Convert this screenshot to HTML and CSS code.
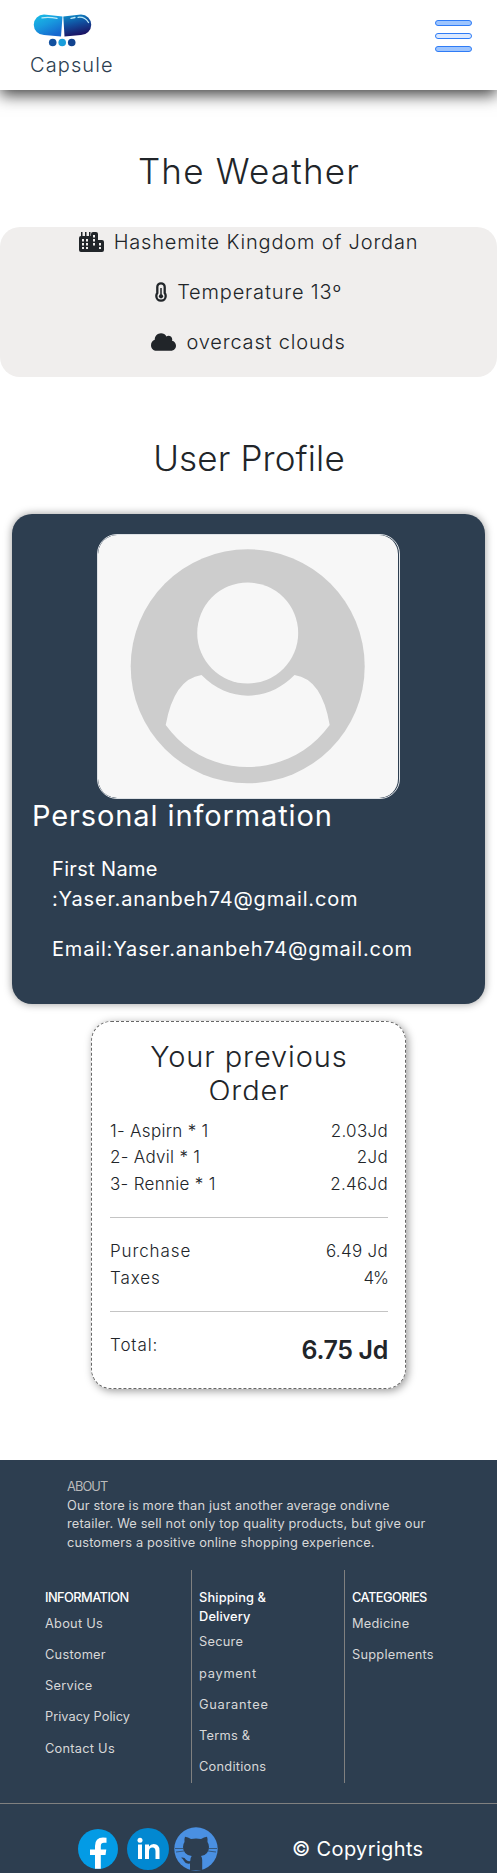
FILE: index.html
```html
<!DOCTYPE html>
<html lang="en">
<head>
<meta charset="utf-8">
<title>Capsule</title>
<link rel="stylesheet" href="styles.css">
</head>
<body>
<header class="site-header">
  <a class="brand">
    <svg class="brand-logo" viewBox="0 0 62 34" width="62" height="34">
      <defs>
        <linearGradient id="capL" x1="0" y1="0" x2=".6" y2="1"><stop offset="0" stop-color="#19c0e6"/><stop offset=".5" stop-color="#189bdf"/><stop offset="1" stop-color="#1668cf"/></linearGradient>
        <linearGradient id="capR" x1="0" y1="0" x2=".3" y2="1"><stop offset="0" stop-color="#0b93cd"/><stop offset=".5" stop-color="#114f9f"/><stop offset="1" stop-color="#1b1464"/></linearGradient>
      </defs>
      <path d="M12 1.500 30.500 3.500 29 23.500 12 22A10.200 10.200 0 0 1 12 1.500Z" fill="url(#capL)"/>
      <path d="M31.300 3.500 49 1.500a10.200 10.200 0 0 1 0 20.500L32.500 23.500Z" fill="url(#capR)"/>
      <path d="M10 4.800Q17 3.800 25 5.300M39 5.300 43 4.500M46 4.300Q53 3.500 56.500 9.500" fill="none" stroke="#bfeaf7" stroke-width="1.300" stroke-linecap="round"/>
      <circle cx="20.700" cy="29.500" r="3.800" fill="#12509f"/><circle cx="30.200" cy="29.500" r="3.800" fill="#1a9edb"/><circle cx="39.700" cy="29.500" r="3.800" fill="#12438f"/>
    </svg>
    <span class="brand-name">Capsule</span>
  </a>
  <div class="menu-button"><i></i><i class="mid"></i><i></i></div>
</header>
<main>
  <h1 class="page-title">The Weather</h1>
  <section class="weather">
    <p><svg viewBox="0 0 25 20" width="25" height="20"><path fill="#212529" fill-rule="evenodd" d="M2 0h1.500v4H6V0h1.500v4H10V0h1.500v4H12V2q0-2 2-2h3q2 0 2 2v6h4q2 0 2 2v8q0 2-2 2H2q-2 0-2-2V6q0-2 2-2ZM3 7v2.500h2V7ZM7 7v2.500h2V7ZM3 11v2.500h2V11ZM7 11v2.500h2V11ZM3 15v2h2v-2ZM7 15v2h2v-2ZM14 3v2.500h2V3ZM14 7v2.500h2V7ZM14 11v2.500h2V11ZM20 11v2.500h2V11ZM20 15v2h2v-2Z"/></svg><span>Hashemite Kingdom of Jordan</span></p>
    <p><svg viewBox="0 0 12 20" width="12" height="20"><path d="M2.300 11V5a3.700 3.700 0 0 1 7.400 0v6q1 1.300 1 3a4.700 4.700 0 0 1-9.400 0q0-1.700 1-3Z" fill="none" stroke="#212529" stroke-width="2.300"/><path d="M6 6v8" stroke="#212529" stroke-width="1.500"/><circle cx="6" cy="14.300" r="2.100" fill="#212529"/></svg><span>Temperature 13º</span></p>
    <p><svg viewBox="0 0 640 512" width="25" height="20"><path fill="#212529" d="M537.600 226.600c4.100-10.700 6.400-22.400 6.400-34.600 0-53-43-96-96-96-19.700 0-38.100 6-53.300 16.200C367 64.200 315.300 32 256 32c-88.400 0-160 71.600-160 160 0 2.700.1 5.400.2 8.100C40.200 219.800 0 273.200 0 336c0 79.500 64.500 144 144 144h368c70.700 0 128-57.300 128-128 0-61.900-44-113.600-102.400-125.400z"/></svg><span>overcast clouds</span></p>
  </section>
  <h1 class="page-title profile-heading">User Profile</h1>
  <section class="profile">
    <div class="avatar">
      <svg viewBox="0 0 300 263" width="300" height="263"><rect width="300" height="263" fill="#f7f7f7"/><circle cx="149.700" cy="131.300" r="117" fill="#cdcdcd"/><circle cx="149.700" cy="98" r="50.500" fill="#f7f7f7"/><path fill="#f7f7f7" d="M103.500 140Q76 144 67.700 190C108 246 191 246 231.700 190Q224 144 196.500 140C170 167.500 130 167.500 103.500 140Z"/></svg>
    </div>
    <h2 class="profile-title">Personal information</h2>
    <ul class="profile-list">
      <li><span class="label">First Name</span><br>:Yaser.ananbeh74@gmail.com</li>
      <li>Email:Yaser.ananbeh74@gmail.com</li>
    </ul>
  </section>
  <section class="order">
    <h2 class="order-title">Your previous<br>Order</h2>
    <div class="row"><span>1- Aspirn * 1</span><span>2.03Jd</span></div>
    <div class="row"><span>2- Advil * 1</span><span>2Jd</span></div>
    <div class="row"><span>3- Rennie * 1</span><span>2.46Jd</span></div>
    <hr>
    <div class="row"><span class="wide">Purchase</span><span>6.49 Jd</span></div>
    <div class="row"><span class="wide">Taxes</span><span class="tight">4%</span></div>
    <hr>
    <div class="row"><span class="wide">Total:</span><strong class="total">6.75 Jd</strong></div>
  </section>
</main>
<footer class="site-footer">
  <div class="about">
    <h6>ABOUT</h6>
    <p>Our store is more than just another average ondivne<br>retailer. We sell not only top quality products, but give our<br>customers a positive online shopping experience.</p>
  </div>
  <div class="columns">
    <div class="col"><h6 class="caps">INFORMATION</h6><ul><li>About Us</li><li>Customer<br>Service</li><li class="snug">Privacy Policy</li><li>Contact Us</li></ul></div>
    <div class="col"><h6>Shipping &amp;<br>Delivery</h6><ul><li>Secure<br><span class="wide">payment</span></li><li class="wide">Guarantee</li><li>Terms &amp;<br>Conditions</li></ul></div>
    <div class="col"><h6 class="caps">CATEGORIES</h6><ul><li>Medicine</li><li>Supplements</li></ul></div>
  </div>
  <div class="bottom">
    <div class="social">
      <svg viewBox="0 0 40 40" width="40" height="40"><circle cx="20" cy="20" r="20" fill="#039be5"/><path fill="#fff" d="M17 39.800V26h-5v-5.500h5V17q0-8.500 8-8.500 2 0 3.500.3v5H26q-3.200 0-3.200 3.200v3.500h5.500L27.500 26h-4.700v13.800Z"/></svg>
      <svg viewBox="0 0 42 42" width="42" height="42"><circle cx="21" cy="21" r="21" fill="#0288d1"/><circle cx="13" cy="12.300" r="2.500" fill="#fff"/><path fill="#fff" d="M11 16.500h4V31h-4ZM18 16.500h4v2q1.500-2.500 4.700-2.500 5.800 0 5.800 6.500V31h-4v-7.500q0-4-3-4-3.500 0-3.500 4V31h-4Z"/></svg>
      <svg viewBox="0 0 44 44" width="44" height="44"><circle cx="22" cy="22" r="21.700" fill="#4a90e2"/><path fill="#2d3e50" d="M11 9.800q3 .2 6 2.200 5-1 10 0 3-2 6-2.200 1 2.700.5 5.200 1.500 2 1.500 5 0 7.500-8 9 1.200 1.500 1.200 4v10.300H16v-6.800q-4.500.8-6-2.500-1-2.300-3-3.300 3.500-.7 5 2 1.700 2 4.200 1.300.2-3.500 1.500-5Q9 27.500 9 20q0-3 1.500-5-.5-2.500.5-5.200Z"/><path d="M1 21.500h8.500M2 25l8-1M34.500 21.500H43M34 24l8 1" stroke="#2d3e50" stroke-width=".9" opacity=".75"/></svg>
    </div>
    <p class="copyright">© Copyrights</p>
  </div>
</footer>
</body>
</html>
```

FILE: styles.css
```css
* { box-sizing: border-box; }
body { margin: 0; font-family: Inter, "Open Sans", sans-serif; font-weight: 300; color: #212529; background: #fff; }
h1, h2, h6, p, ul { margin: 0; padding: 0; font-weight: inherit; }
ul { list-style: none; }
svg { display: block; flex: none; }

.site-header { height: 90px; padding: 13px 25px 0 30px; display: flex; justify-content: space-between; background: #fff; box-shadow: 0 5px 15px rgba(0, 0, 0, .75); }
.brand { display: flex; flex-direction: column; color: #2d3e50; font-size: 20px; line-height: 30px; letter-spacing: 1.100px; }
.brand-logo { margin-left: 2px; margin-bottom: 3px; }
.menu-button { width: 37px; padding-top: 7px; display: flex; flex-direction: column; gap: 7px; }
.menu-button i { height: 6px; border: 1px solid #2f7cf6; border-radius: 3px; background: #9ec5fe; }
.menu-button .mid { background: #dbe9ff; }

.page-title { margin-top: 60px; padding-left: 1px; font-size: 35px; line-height: 42px; letter-spacing: 1.220px; text-align: center; white-space: nowrap; }
.profile-heading { letter-spacing: .150px; }
.weather { margin: 35px 0 60px; height: 150px; border-radius: 20px; background: #f0eeed; font-size: 20px; line-height: 30px; letter-spacing: .820px; }
.weather p { display: flex; justify-content: center; align-items: center; gap: 10px; margin-bottom: 20px; }

.profile { margin: 35px 12px 17px; height: 490px; padding: 20px 21px; border-radius: 20px; background: #2d3e50; color: #fff; font-weight: 400; box-shadow: 0 0 8px rgba(0, 0, 0, .4); }
.avatar { width: 303px; height: 265px; margin-left: 64px; border: 1px solid #dee2e6; border-radius: 20px; overflow: hidden; }
.avatar svg { border-radius: 19px; }
.profile-title { margin-left: -1px; font-size: 29px; line-height: 34px; letter-spacing: .890px; white-space: nowrap; }
.profile-list { margin: 21px 0 0 19px; font-size: 20px; line-height: 30px; letter-spacing: .820px; white-space: nowrap; }
.profile-list li { margin-bottom: 20px; }
.profile-list .label { letter-spacing: .350px; }

.order { width: 315px; height: 368px; margin: 0 auto 71px 91px; padding: 18px 17px 0 18px; border: 1px dashed #666; border-radius: 20px; box-shadow: 2px 2px 8px rgba(0, 0, 0, .4); font-size: 17px; line-height: 26.400px; letter-spacing: .300px; }
.order-title { height: 60px; margin-bottom: 18px; overflow: hidden; font-size: 29px; line-height: 34px; letter-spacing: .900px; text-align: center; }
.row { display: flex; justify-content: space-between; }
.order .wide { letter-spacing: .900px; }
.order .tight { letter-spacing: -1px; }
.order hr { margin: 20px 0; border: 0; border-top: 1px solid #c4c4c4; }
.order .total { margin-top: -1px; font-size: 25px; line-height: 39px; font-weight: 600; letter-spacing: -.350px; }

.site-footer { height: 413px; padding-top: 18px; background: #2d3e50; color: #d8d8d8; font-size: 12.800px; font-weight: 400; line-height: 18.700px; letter-spacing: .250px; }
.about { margin-left: 67px; height: 92px; letter-spacing: .170px; white-space: nowrap; }
.about h6 { font-size: inherit; color: #bbb; letter-spacing: -.900px; }
.columns { display: grid; grid-template-columns: 146px 153px 153px; margin-left: 45px; height: 213px; }
.col { padding-top: 19px; }
.col + .col { border-left: 1px solid #808080; padding-left: 7px; }
.col h6 { font-size: inherit; font-weight: 500; color: #fff; letter-spacing: .150px; }
.col .caps { letter-spacing: -.550px; }
.col .wide { letter-spacing: .750px; }
.col .snug { letter-spacing: .020px; }
.col ul { line-height: 31.200px; }
.bottom { margin-top: 20px; border-top: 1px solid #808080; height: 70px; padding: 23px 0 0 78px; display: flex; }
.social { display: flex; align-items: center; gap: 7px; width: 214px; height: 44px; }
.social svg:first-child { margin-right: 2px; }
.social svg:last-child { margin-left: -2px; }
.copyright { font-size: 20px; line-height: 44px; letter-spacing: .350px; color: #fff; }
```
